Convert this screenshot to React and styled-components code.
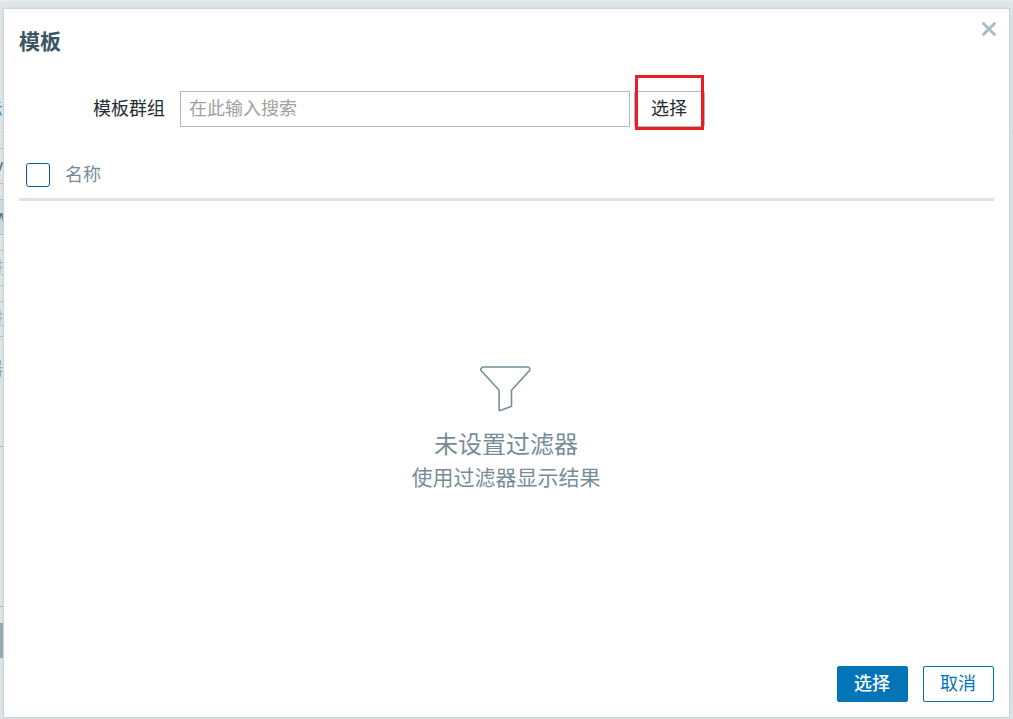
import React from 'react';
import styled, { createGlobalStyle, css } from 'styled-components';

const GlobalStyle = createGlobalStyle`
  *, *::before, *::after { box-sizing: border-box; }
  body {
    margin: 0;
    background: #e3e9eb;
    color: #1f2c33;
    font: 18px/24px "Noto Sans CJK SC", "Noto Sans", sans-serif;
  }
  button, input { font: inherit; }
`;

const Page = styled.div`
  position: relative;
  display: flex;
  min-height: 100vh;
  padding: 8px 3px 1px;
  overflow: hidden;
`;

/* The dimmed form that stays visible behind the dialog */
const Backdrop = styled.div`
  position: absolute;
  inset: 0;
  display: flex;
  flex-direction: column;
  padding-top: 95px;
  overflow: hidden;
  border-top: 1px solid #ebeff1;
`;

const BackdropTab = styled.div`
  flex: none;
  height: 36px;
  margin-bottom: 16px;
  border-bottom: 1px solid #d3dbde;
  color: #4796c4;
  text-indent: -15px;
`;

const BackdropField = styled.div`
  flex: none;
  width: 680px;
  height: 36px;
  margin-bottom: 15px;
  border: solid #b3c2c8;
  border-width: 1px 0;
  background: ${({ $active }) => ($active ? '#d3dde7' : 'transparent')};
  color: ${({ $muted }) => ($muted ? '#a5afb3' : '#59666c')};
  line-height: 30px;
  white-space: nowrap;
  text-indent: ${({ $muted }) => ($muted ? '-4px' : '-6px')};
`;

const BackdropLink = styled.div`
  flex: none;
  width: 680px;
  height: 95px;
  padding-top: 3px;
  border-bottom: 1px solid #b3c2c8;
  color: #87a3b2;
  text-indent: -15px;
`;

const BackdropArea = styled.div`
  flex: none;
  width: 680px;
  height: 160px;
  margin-bottom: 16px;
  border-bottom: 1px solid #b3c2c8;
`;

const BackdropAction = styled.div`
  flex: none;
  width: 71px;
  height: 35px;
  background: #9aabb3;
`;

const Dialog = styled.section`
  position: relative;
  display: flex;
  flex: 1;
  flex-direction: column;
  min-width: 0;
  padding: 0 15px 15px;
  border: 1px solid #c9d3d8;
  background: #fff;
  box-shadow: 0 0 12px rgba(130, 150, 150, 0.2);
`;

const DialogHeader = styled.header`
  display: flex;
  justify-content: space-between;
  align-items: flex-start;
  padding-top: 16px;
`;

const Title = styled.h1`
  margin: 0;
  color: #3c5563;
  font-size: 21px;
  line-height: 30px;
  font-weight: 700;
`;

const CloseButton = styled.button`
  display: flex;
  align-items: center;
  justify-content: center;
  width: 24px;
  height: 24px;
  margin: -8px -7px 0 0;
  padding: 0;
  border: 0;
  background: none;
  color: #abbbc4;
`;

const FilterRow = styled.form`
  display: flex;
  align-items: center;
  margin-top: 36px;
`;

const FilterLabel = styled.label`
  width: 146px;
  margin-right: 15px;
  padding-bottom: 4px;
  text-align: right;
`;

const SearchInput = styled.input`
  width: 450px;
  min-width: 0;
  height: 36px;
  margin-right: 4px;
  padding: 0 8px 4px;
  border: 1px solid #acbbc2;
  border-radius: 0;
  background: #fff;
  &::placeholder { color: #a0a0a0; opacity: 1; }
`;

const buttonKinds = {
  plain: css`
    border-color: #acbbc2;
    background: #fff;
    color: #1f2c33;
  `,
  primary: css`
    border-color: #0275b8;
    background: #0275b8;
    color: #fff;
    font-weight: 500;
  `,
  outline: css`
    border-color: #0275b8;
    background: #fff;
    color: #0275b8;
  `,
};

const Button = styled.button`
  width: 71px;
  height: 36px;
  padding: 0 1px 4px 0;
  border: 1px solid;
  border-radius: 2px;
  ${({ $kind }) => buttonKinds[$kind]}
`;

const Highlighted = styled.div`
  position: relative;
  display: flex;
  &::after {
    content: '';
    position: absolute;
    inset: -16px 1px -3px;
    border: 3px solid #ec1c24;
    pointer-events: none;
  }
`;

const Table = styled.table`
  width: 100%;
  margin-top: 24px;
  border-collapse: separate;
  border-spacing: 0;
`;

const HeadCell = styled.th`
  height: 50px;
  padding: ${({ $check }) => ($check ? '0 0 0 7px' : '0 0 3px')};
  width: ${({ $check }) => ($check ? '46px' : 'auto')};
  border-bottom: 3px solid #dce2e7;
  color: #768d99;
  font-weight: 400;
  text-align: left;
`;

const Checkbox = styled.input`
  appearance: none;
  display: block;
  width: 24px;
  height: 24px;
  margin: 0;
  border: 1px solid #0a5f97;
  border-radius: 3px;
  background: #fff;
  &:checked { background: #0275b8; }
`;

const Empty = styled.div`
  display: flex;
  flex: 1;
  flex-direction: column;
  align-items: center;
  justify-content: center;
  padding: 4px 1px 0 0;
  color: #768d99;
`;

const EmptyTitle = styled.p`
  margin: 12px 0 0;
  font-size: 24px;
  line-height: 36px;
`;

const EmptyText = styled.p`
  margin: 0;
  font-size: 21px;
  line-height: 30px;
`;

const DialogFooter = styled.footer`
  display: flex;
  justify-content: flex-end;
  gap: 15px;
  padding-top: 15px;
`;

const CloseIcon = () => (
  <svg width="16" height="16" viewBox="0 0 16 16" fill="none" stroke="currentColor" strokeWidth="2.8" aria-hidden="true">
    <path d="M1.7 1.7 14.3 14.3M14.3 1.7 1.7 14.3" />
  </svg>
);

const FunnelIcon = () => (
  <svg width="52" height="48" viewBox="0 0 52 48" fill="none" stroke="currentColor" strokeWidth="1.6" strokeLinejoin="round" aria-hidden="true">
    <path d="M3.5 2H47.500C49.900 2 50.500 4.400 49.100 6L31.500 25.300V41.200L20.300 45.600Q19.100 46 19.100 44.800V25.300L1.500 6C.1 4.400 1.100 2 3.500 2Z" />
  </svg>
);

export default function App() {
  return (
    <>
      <GlobalStyle />
      <Page>
        <Backdrop aria-hidden="true">
          <BackdropTab>示</BackdropTab>
          <BackdropField>v</BackdropField>
          <BackdropField $active>w</BackdropField>
          <BackdropField $muted>搜索</BackdropField>
          <BackdropField $muted>搜索</BackdropField>
          <BackdropLink>器</BackdropLink>
          <BackdropArea />
          <BackdropAction />
        </Backdrop>
        <Dialog role="dialog" aria-labelledby="dialog-title">
          <DialogHeader>
            <Title id="dialog-title">模板</Title>
            <CloseButton type="button" aria-label="关闭">
              <CloseIcon />
            </CloseButton>
          </DialogHeader>
          <FilterRow>
            <FilterLabel htmlFor="template-group">模板群组</FilterLabel>
            <SearchInput id="template-group" type="text" placeholder="在此输入搜索" />
            <Highlighted>
              <Button type="button" $kind="plain">选择</Button>
            </Highlighted>
          </FilterRow>
          <Table>
            <thead>
              <tr>
                <HeadCell $check>
                  <Checkbox type="checkbox" aria-label="全选" />
                </HeadCell>
                <HeadCell>名称</HeadCell>
              </tr>
            </thead>
          </Table>
          <Empty>
            <FunnelIcon />
            <EmptyTitle>未设置过滤器</EmptyTitle>
            <EmptyText>使用过滤器显示结果</EmptyText>
          </Empty>
          <DialogFooter>
            <Button type="button" $kind="primary">选择</Button>
            <Button type="button" $kind="outline">取消</Button>
          </DialogFooter>
        </Dialog>
      </Page>
    </>
  );
}
